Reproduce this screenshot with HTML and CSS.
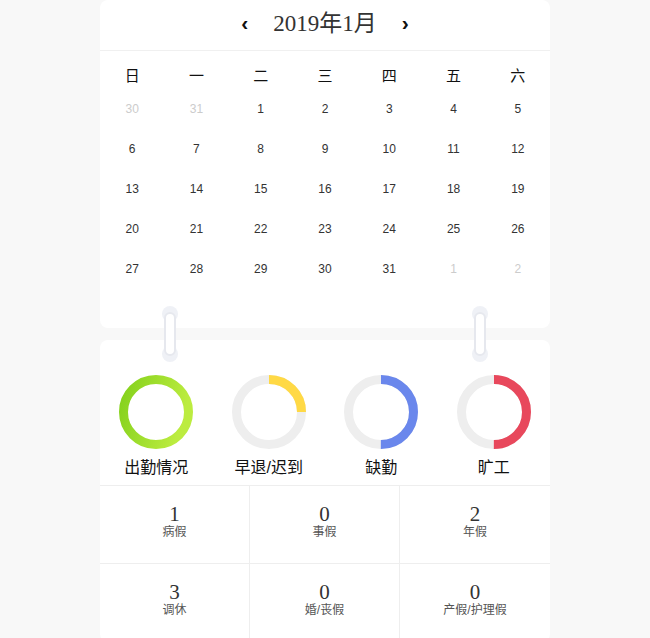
FILE: index.html
```html
<!DOCTYPE html>
<html lang="zh-CN">
<head>
    <meta charset="UTF-8">
    <meta name="viewport" content="width=device-width, initial-scale=1.0">
    <title>考勤日历</title>
    <link rel="stylesheet" href="styles.css">
</head>
<body>
    <div class="wrap">
        <div class="card calendar">
            <div class="cal-header">
                <span class="arrow">‹</span>
                <span class="month">2019年1月</span>
                <span class="arrow">›</span>
            </div>
            <div class="week">
                <span>日</span><span>一</span><span>二</span><span>三</span><span>四</span><span>五</span><span>六</span>
            </div>
            <div class="days">
                <span class="other">30</span><span class="other">31</span><span>1</span><span>2</span><span>3</span><span>4</span><span>5</span>
                <span>6</span><span>7</span><span>8</span><span>9</span><span>10</span><span>11</span><span>12</span>
                <span>13</span><span>14</span><span>15</span><span>16</span><span>17</span><span>18</span><span>19</span>
                <span>20</span><span>21</span><span>22</span><span>23</span><span>24</span><span>25</span><span>26</span>
                <span>27</span><span>28</span><span>29</span><span>30</span><span>31</span><span class="other">1</span><span class="other">2</span>
            </div>
        </div>

        <div class="clip clip-left"><i></i></div>
        <div class="clip clip-right"><i></i></div>

        <div class="card stats">
            <div class="rings">
                <div class="ring-item">
                    <svg class="ring" viewBox="0 0 74 74" width="74" height="74">
                        <defs>
                            <linearGradient id="green" x1="0" y1="0" x2="1" y2="0.3">
                                <stop offset="0" stop-color="#84d11c"/>
                                <stop offset="1" stop-color="#bcec40"/>
                            </linearGradient>
                        </defs>
                        <circle cx="37" cy="37" r="32.5" fill="none" stroke="url(#green)" stroke-width="9"/>
                    </svg>
                    <div class="ring-label">出勤情况</div>
                </div>
                <div class="ring-item">
                    <svg class="ring" viewBox="0 0 74 74" width="74" height="74">
                        <circle cx="37" cy="37" r="32.5" fill="none" stroke="#eeeeee" stroke-width="9"/>
                        <circle class="arc" cx="37" cy="37" r="32.5" fill="none" stroke="#ffd945" stroke-width="9" stroke-dasharray="51.05 204.2"/>
                    </svg>
                    <div class="ring-label">早退/迟到</div>
                </div>
                <div class="ring-item">
                    <svg class="ring" viewBox="0 0 74 74" width="74" height="74">
                        <circle cx="37" cy="37" r="32.5" fill="none" stroke="#eeeeee" stroke-width="9"/>
                        <circle class="arc" cx="37" cy="37" r="32.5" fill="none" stroke="#6a87ec" stroke-width="9" stroke-dasharray="102.1 204.2"/>
                    </svg>
                    <div class="ring-label">缺勤</div>
                </div>
                <div class="ring-item">
                    <svg class="ring" viewBox="0 0 74 74" width="74" height="74">
                        <circle cx="37" cy="37" r="32.5" fill="none" stroke="#eeeeee" stroke-width="9"/>
                        <circle class="arc" cx="37" cy="37" r="32.5" fill="none" stroke="#e8485c" stroke-width="9" stroke-dasharray="102.1 204.2"/>
                    </svg>
                    <div class="ring-label">旷工</div>
                </div>
            </div>
            <div class="leave-grid">
                <div class="leave"><div class="num">1</div><div class="name">病假</div></div>
                <div class="leave"><div class="num">0</div><div class="name">事假</div></div>
                <div class="leave"><div class="num">2</div><div class="name">年假</div></div>
                <div class="leave"><div class="num">3</div><div class="name">调休</div></div>
                <div class="leave"><div class="num">0</div><div class="name">婚/丧假</div></div>
                <div class="leave"><div class="num">0</div><div class="name">产假/护理假</div></div>
            </div>
        </div>
    </div>
</body>
</html>
```

FILE: styles.css
```css
body {
    margin: 0;
    padding: 0;
    background-color: #f8f8f8;
    font-family: "Liberation Sans", "Noto Sans CJK SC", sans-serif;
    color: #333333;
}
.wrap {
    position: relative;
    width: 450px;
    margin: 0 auto;
}
.card {
    background-color: #ffffff;
    border-radius: 8px;
}
.cal-header {
    display: flex;
    align-items: center;
    justify-content: center;
    height: 50px;
    border-bottom: 1px solid #f0f0f0;
}
.month {
    font-family: "Liberation Serif", "Noto Sans CJK SC", serif;
    font-size: 23px;
    line-height: 26px;
    color: #333333;
    margin: -3px 25px 0;
}
.arrow {
    font-size: 21px;
    font-weight: bold;
    color: #111111;
    line-height: 22px;
    margin-top: -4px;
}
.week {
    display: grid;
    grid-template-columns: repeat(7, 1fr);
    padding-top: 12px;
    height: 26px;
    line-height: 26px;
    text-align: center;
    font-size: 15px;
    color: #111111;
}
.days {
    display: grid;
    grid-template-columns: repeat(7, 1fr);
    grid-auto-rows: 40px;
    padding-bottom: 39px;
    text-align: center;
    font-size: 12px;
    line-height: 40px;
    color: #333333;
}
.days .other {
    color: #cccccc;
}
.stats {
    margin-top: 12px;
    padding-top: 35px;
    overflow: hidden;
}
.rings {
    display: grid;
    grid-template-columns: repeat(4, 1fr);
    padding-bottom: 6px;
}
.ring-item {
    display: flex;
    flex-direction: column;
    align-items: center;
}
.ring {
    display: block;
}
.ring .arc {
    transform: rotate(-90deg);
    transform-origin: 37px 37px;
}
.ring-label {
    margin-top: 8px;
    font-size: 16px;
    line-height: 22px;
    color: #111111;
}
.leave-grid {
    display: grid;
    grid-template-columns: repeat(3, 1fr);
    border-top: 1px solid #eeeeee;
}
.leave {
    height: 78px;
    padding-top: 17px;
    box-sizing: border-box;
    text-align: center;
    border-right: 1px solid #eeeeee;
    border-bottom: 1px solid #eeeeee;
}
.leave:nth-child(3n) {
    border-right: none;
}
.leave .num {
    font-family: "Liberation Serif", serif;
    font-size: 21px;
    line-height: 22px;
    color: #333333;
}
.leave .name {
    font-size: 12px;
    line-height: 15px;
    color: #555555;
}
.clip {
    position: absolute;
    top: 306px;
    width: 16px;
    height: 56px;
    z-index: 2;
}
.clip-left {
    left: 62px;
}
.clip-right {
    left: 372px;
}
.clip::before,
.clip::after {
    content: "";
    position: absolute;
    left: 0;
    width: 16px;
    height: 16px;
    border-radius: 50%;
    background-color: #eff1f6;
}
.clip::before {
    top: 0;
}
.clip::after {
    bottom: 0;
}
.clip i {
    position: absolute;
    left: 2px;
    top: 6px;
    width: 8px;
    height: 40px;
    border: 2px solid #e6e8ee;
    border-radius: 6px;
    background-color: #ffffff;
    z-index: 1;
}
```
